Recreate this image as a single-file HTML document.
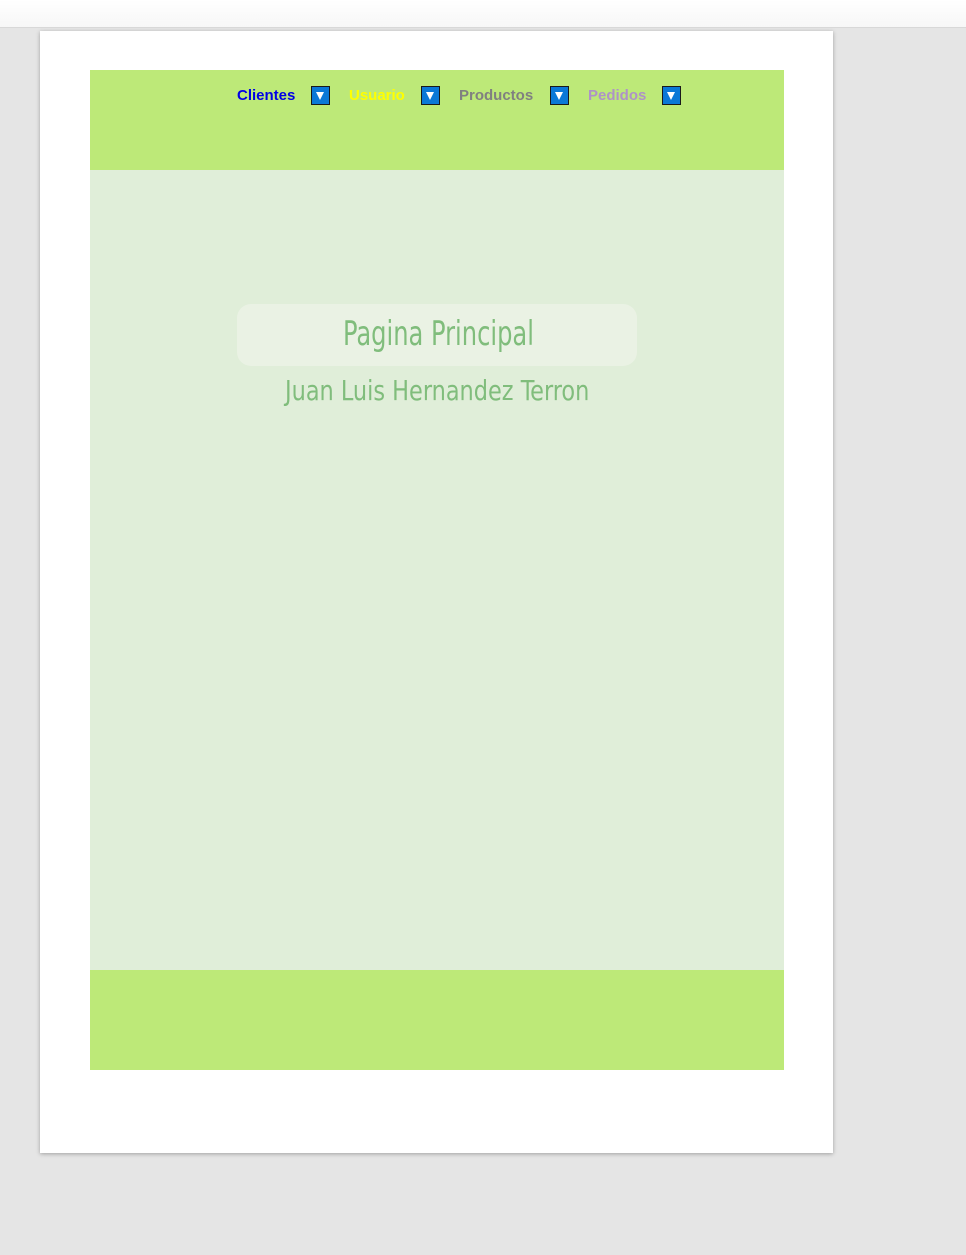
<!DOCTYPE html>
<html><head><meta charset="utf-8"><style>
html,body{margin:0;padding:0;width:966px;height:1255px;background:#e5e5e5;overflow:hidden;font-family:"Liberation Sans",sans-serif}
.top{position:absolute;left:0;top:0;width:966px;height:27px;background:linear-gradient(#fff,#f7f7f7);border-bottom:1px solid #d8d8d8}
.page{position:absolute;left:40px;top:31px;width:793px;height:1122px;background:#fff;box-shadow:0 1px 4px rgba(0,0,0,.3)}
.hdr{position:absolute;left:90px;top:70px;width:694px;height:100px;background:#bde978}
.main{position:absolute;left:90px;top:170px;width:694px;height:800px;background:#e0eed9}
.ftr{position:absolute;left:90px;top:970px;width:694px;height:100px;background:#bde978}
.nav{position:absolute;top:86px;font-weight:bold;font-size:15px;line-height:20px}
.btn{position:absolute;top:86px;width:17px;height:17px;background:#0a78d7;border:1px solid #1a1a1a}
.btn:after{content:"";position:absolute;left:4px;top:5px;border-left:4.5px solid transparent;border-right:4.5px solid transparent;border-top:8px solid #fff}
.box{position:absolute;left:237px;top:304px;width:400px;height:62px;border-radius:14px;background:#eaf2e4}
.t{position:absolute;color:#80bd7c;font-family:"DejaVu Sans Condensed","DejaVu Sans",sans-serif;font-weight:200;white-space:nowrap;transform-origin:0 0}
</style></head><body>
<div class="top"></div>
<div class="page"></div>
<div class="hdr"></div>
<div class="main"></div>
<div class="ftr"></div>
<div class="nav" style="left:237px;color:#0000e6">Clientes</div>
<div class="btn" style="left:311px"></div>
<div class="nav" style="left:349px;color:#ffff00">Usuario</div>
<div class="btn" style="left:421px"></div>
<div class="nav" style="left:459px;color:#808080">Productos</div>
<div class="btn" style="left:550px"></div>
<div class="nav" style="left:588px;color:#ae92c8">Pedidos</div>
<div class="btn" style="left:662px"></div>
<div class="box"></div>
<div class="t" style="left:343px;top:314px;font-size:34px;transform:scaleX(0.79)">Pagina Principal</div>
<div class="t" style="left:285px;top:374px;font-size:28px;transform:scaleX(0.89)">Juan Luis Hernandez Terron</div>
</body></html>
